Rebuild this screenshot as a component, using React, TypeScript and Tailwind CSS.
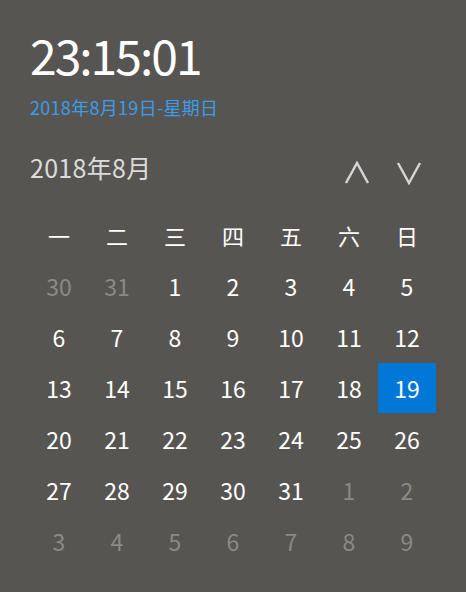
import React from 'react';

const font = { fontFamily: '"Noto Sans CJK SC", "Noto Sans", sans-serif' };

const weekdays = ['一', '二', '三', '四', '五', '六', '日'];

type Day = { n: number; cur: boolean };

const buildDays = (): Day[] => {
  const days: Day[] = [];
  days.push({ n: 30, cur: false }, { n: 31, cur: false });
  for (let i = 1; i <= 31; i++) days.push({ n: i, cur: true });
  for (let i = 1; days.length < 42; i++) days.push({ n: i, cur: false });
  return days;
};

const Chevron = ({ up }: { up: boolean }) => (
  <svg width="26" height="24" viewBox="0 0 26 24" fill="none">
    <polyline
      points={up ? '2,22 13,2 24,22' : '2,2 13,22 24,2'}
      stroke="#d6d6d6"
      strokeWidth="2.4"
      strokeLinejoin="miter"
    />
  </svg>
);

export default function App() {
  const days = buildDays();
  return (
    <div className="w-[466px] h-[592px] bg-[#575551] px-[30px] pt-[26px]" style={font}>
      {/* Clock */}
      <div className="text-[48px] leading-[56px] tracking-[-2px] text-white">23:15:01</div>
      <div className="mt-[13px] text-[18px] leading-[24px] tracking-[0.3px] text-[#3b9ce9]">2018年8月19日-星期日</div>

      {/* Month header */}
      <div className="mt-[32px] flex items-start justify-between h-[59px]">
        <div className="text-[25px] leading-[32px] tracking-[0.3px] text-[#dcdcdc]">2018年8月</div>
        <div className="flex gap-[26px] pt-[10px] pr-[14px]">
          <Chevron up />
          <Chevron up={false} />
        </div>
      </div>

      {/* Calendar grid */}
      <div className="grid grid-cols-7 w-[406px]">
        {weekdays.map((w) => (
          <div key={w} className="h-[51px] flex items-center justify-center text-[22px] text-white">
            {w}
          </div>
        ))}
        {days.map((d, i) => {
          const today = d.cur && d.n === 19;
          return (
            <div key={i} className="h-[51px] flex items-start justify-center">
              <div
                className={`w-[58px] h-[50px] flex items-center justify-center text-[23px] ${
                  today ? 'bg-[#0078d7] text-white' : d.cur ? 'text-white' : 'text-[#8b8985]'
                }`}
              >
                {d.n}
              </div>
            </div>
          );
        })}
      </div>
    </div>
  );
}
